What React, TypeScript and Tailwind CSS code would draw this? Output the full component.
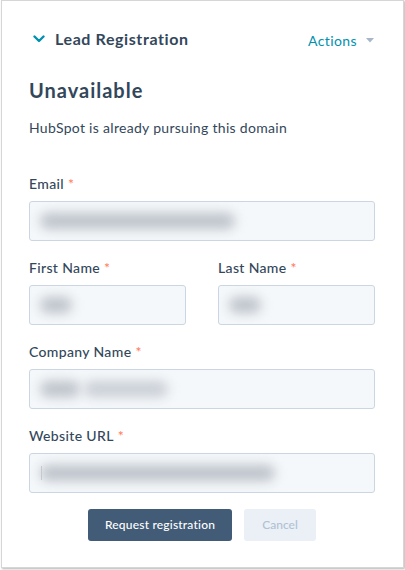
import React from 'react';

const Blur: React.FC<{ w: number; dark?: boolean }> = ({ w, dark }) => (
    <div
        className={`h-[16px] rounded-full blur-[6px] ${dark ? 'bg-[#bcc2ca]' : 'bg-[#c9ced5]'}`}
        style={{ width: w }}
    />
);

const Field: React.FC<{ label: string; blurs: number[]; className?: string; cursor?: boolean }> = ({
    label,
    blurs,
    className,
    cursor,
}) => (
    <div className={className}>
        <div className="h-5 text-[14px] leading-5 font-medium text-[#33475b] tracking-[0.35px]">
            {label}
            <span className="text-[#ff7a59] ml-[4px]">*</span>
        </div>
        <div className="mt-[7px] h-10 rounded-[3px] border border-[#cbd6e2] bg-[#f5f8fa] flex items-center pl-[10px] gap-[4px] relative overflow-hidden">
            {cursor && <div className="absolute left-[11px] top-[12px] w-px h-[14px] bg-[#c9ced5]" />}
            {blurs.map((w, i) => (
                <Blur key={i} w={w} dark={i === 0} />
            ))}
        </div>
    </div>
);

const App: React.FC = () => {
    return (
        <div className="w-[405px] h-[570px] bg-white" style={{ fontFamily: 'Lato, "Open Sans", sans-serif' }}>
            <div className="ml-px w-[403px] h-[568px] border border-[#d6d6d6] shadow-[1px_1px_2px_rgba(0,0,0,0.3)] bg-white pl-[27px] pr-[28px] pt-[28px]">
                <div className="flex items-center justify-between h-5">
                    <div className="flex items-center">
                        <svg width="12" height="8" viewBox="0 0 12 8" className="ml-[4px] mr-[10px]">
                            <path d="M1.5 1.5 L6 6 L10.5 1.5" fill="none" stroke="#0091ae" strokeWidth="2.4" strokeLinecap="round" strokeLinejoin="round" />
                        </svg>
                        <span className="text-[16px] font-bold text-[#33475b] tracking-[0.6px]">Lead Registration</span>
                    </div>
                    <div className="flex items-center mt-[3px] mr-[1px]">
                        <span className="text-[14px] text-[#0091ae] tracking-[0.4px]">Actions</span>
                        <svg width="8" height="5" viewBox="0 0 8 5" className="ml-[9px]">
                            <path d="M0 0 H8 L4 4.5 Z" fill="#a7b6c8" />
                        </svg>
                    </div>
                </div>

                <h2 className="mt-[27px] h-7 text-[20px] leading-7 font-bold text-[#33475b] tracking-[1px]">Unavailable</h2>
                <p className="mt-[14px] h-5 text-[14px] leading-5 text-[#33475b] tracking-[0.3px]">
                    HubSpot is already pursuing this domain
                </p>

                <Field className="mt-[36px]" label="Email" blurs={[195]} />
                <div className="mt-[17px] grid grid-cols-2 gap-8">
                    <Field label="First Name" blurs={[32]} />
                    <Field label="Last Name" blurs={[32]} />
                </div>
                <Field className="mt-[17px]" label="Company Name" blurs={[40, 84]} />
                <Field className="mt-[17px]" label="Website URL" blurs={[235]} cursor />

                <div className="mt-[16px] flex justify-center gap-3">
                    <button className="h-8 w-[144px] rounded-[3px] bg-[#425b76] text-white text-[12px] font-medium tracking-[0.2px]">
                        Request registration
                    </button>
                    <button className="h-8 w-[72px] rounded-[3px] bg-[#eaf0f6] text-[#b0c1d4] text-[12px] font-medium">
                        Cancel
                    </button>
                </div>
            </div>
        </div>
    );
};

export default App;
